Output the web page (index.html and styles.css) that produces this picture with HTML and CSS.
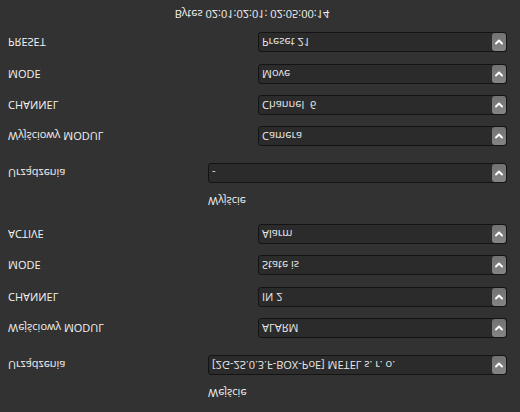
FILE: index.html
```html
<!DOCTYPE html>
<html>
<head>
<meta charset="utf-8">
<link rel="stylesheet" href="styles.css">
</head>
<body>
<div class="page">
  <section class="group">
    <div class="heading">Wejście</div>
    <div class="row wide">
      <span class="label">Urządzenia</span>
      <div class="select"><span class="value">[2G-2S.0.3.F-BOX-PoE] METEL s. r. o.</span><span class="btn"><svg viewBox="0 0 14 18" width="14" height="18"><path d="M4 7.5 L7 10.5 L10 7.5" fill="none" stroke="#fff" stroke-width="2" stroke-linecap="round" stroke-linejoin="round"/></svg></span></div>
    </div>
    <div class="rows">
      <div class="row">
        <span class="label">Wejściowy MODUL</span>
        <div class="select"><span class="value">ALARM</span><span class="btn"><svg viewBox="0 0 14 18" width="14" height="18"><path d="M4 7.5 L7 10.5 L10 7.5" fill="none" stroke="#fff" stroke-width="2" stroke-linecap="round" stroke-linejoin="round"/></svg></span></div>
      </div>
      <div class="row">
        <span class="label">CHANNEL</span>
        <div class="select"><span class="value">IN 2</span><span class="btn"><svg viewBox="0 0 14 18" width="14" height="18"><path d="M4 7.5 L7 10.5 L10 7.5" fill="none" stroke="#fff" stroke-width="2" stroke-linecap="round" stroke-linejoin="round"/></svg></span></div>
      </div>
      <div class="row">
        <span class="label">MODE</span>
        <div class="select"><span class="value">State is</span><span class="btn"><svg viewBox="0 0 14 18" width="14" height="18"><path d="M4 7.5 L7 10.5 L10 7.5" fill="none" stroke="#fff" stroke-width="2" stroke-linecap="round" stroke-linejoin="round"/></svg></span></div>
      </div>
      <div class="row">
        <span class="label">ACTIVE</span>
        <div class="select"><span class="value">Alarm</span><span class="btn"><svg viewBox="0 0 14 18" width="14" height="18"><path d="M4 7.5 L7 10.5 L10 7.5" fill="none" stroke="#fff" stroke-width="2" stroke-linecap="round" stroke-linejoin="round"/></svg></span></div>
      </div>
    </div>
  </section>
  <section class="group second">
    <div class="heading">Wyjście</div>
    <div class="row wide">
      <span class="label">Urządzenia</span>
      <div class="select"><span class="value">-</span><span class="btn"><svg viewBox="0 0 14 18" width="14" height="18"><path d="M4 7.5 L7 10.5 L10 7.5" fill="none" stroke="#fff" stroke-width="2" stroke-linecap="round" stroke-linejoin="round"/></svg></span></div>
    </div>
    <div class="rows">
      <div class="row">
        <span class="label">Wyjściowy MODUL</span>
        <div class="select"><span class="value">Camera</span><span class="btn"><svg viewBox="0 0 14 18" width="14" height="18"><path d="M4 7.5 L7 10.5 L10 7.5" fill="none" stroke="#fff" stroke-width="2" stroke-linecap="round" stroke-linejoin="round"/></svg></span></div>
      </div>
      <div class="row">
        <span class="label">CHANNEL</span>
        <div class="select"><span class="value">Channel&nbsp; 6</span><span class="btn"><svg viewBox="0 0 14 18" width="14" height="18"><path d="M4 7.5 L7 10.5 L10 7.5" fill="none" stroke="#fff" stroke-width="2" stroke-linecap="round" stroke-linejoin="round"/></svg></span></div>
      </div>
      <div class="row">
        <span class="label">MODE</span>
        <div class="select"><span class="value">Move</span><span class="btn"><svg viewBox="0 0 14 18" width="14" height="18"><path d="M4 7.5 L7 10.5 L10 7.5" fill="none" stroke="#fff" stroke-width="2" stroke-linecap="round" stroke-linejoin="round"/></svg></span></div>
      </div>
      <div class="row">
        <span class="label">PRESET</span>
        <div class="select"><span class="value">Preset 21</span><span class="btn"><svg viewBox="0 0 14 18" width="14" height="18"><path d="M4 7.5 L7 10.5 L10 7.5" fill="none" stroke="#fff" stroke-width="2" stroke-linecap="round" stroke-linejoin="round"/></svg></span></div>
      </div>
    </div>
  </section>
  <div class="bytes">Bytes 02:01:02:01: 02:05:00:14</div>
</div>
</body>
</html>
```
FILE: styles.css
```css
html, body {
  margin: 0;
  padding: 0;
  background: #323232;
}
body {
  width: 520px;
  height: 412px;
  overflow: hidden;
  font-family: "Open Sans", "Noto Sans", sans-serif;
  font-size: 11px;
  color: #f2f2f2;
}
.page {
  width: 520px;
  height: 412px;
  box-sizing: border-box;
  padding: 12px 13px 0 8px;
  transform: scaleY(-1);
  display: flex;
  flex-direction: column;
}
.heading {
  height: 14px;
  line-height: 14px;
  margin-left: 200px;
}
.group .row.wide {
  margin-top: 11px;
}
.rows {
  display: flex;
  flex-direction: column;
  gap: 11.3px;
  margin-top: 17px;
}
.second {
  margin-top: 16px;
}
.row {
  display: grid;
  grid-template-columns: 250px 1fr;
  align-items: center;
  height: 20px;
}
.row.wide {
  grid-template-columns: 200px 1fr;
}
.label {
  line-height: 14px;
  white-space: nowrap;
}
.select {
  height: 20px;
  box-sizing: border-box;
  border: 1px solid #141414;
  border-radius: 3px;
  background: #2b2b2b;
  display: flex;
  align-items: center;
  justify-content: space-between;
  padding: 0 0 0 3px;
  color: #e8e8e8;
}
.value {
  white-space: nowrap;
  line-height: 14px;
}
.btn {
  width: 14px;
  height: 18px;
  border-radius: 3px;
  background: linear-gradient(#858585, #727272);
  display: flex;
  align-items: center;
  justify-content: center;
}
.btn svg {
  display: block;
}
.bytes {
  margin-top: 11px;
  text-align: center;
  margin-left: -8px;
  margin-right: 3px;
  line-height: 14px;
}
```
